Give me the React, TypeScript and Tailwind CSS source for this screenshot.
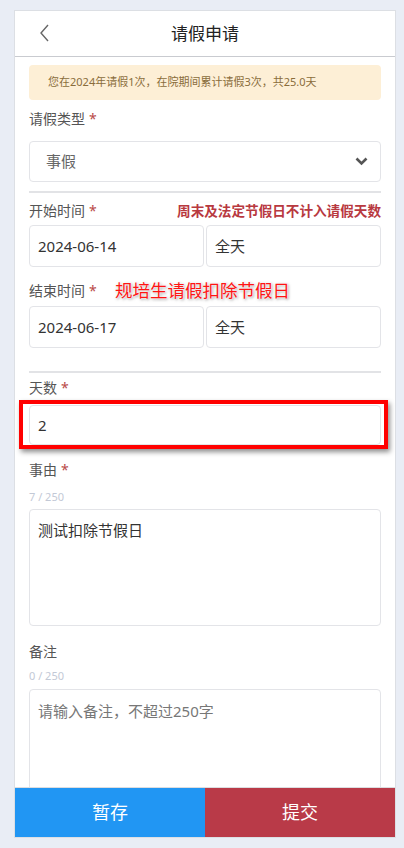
import { ReactNode } from 'react';

const font = "font-['Noto_Sans','Noto_Sans_CJK_SC',sans-serif]";

function Label({ children, required, className = '' }: { children: ReactNode; required?: boolean; className?: string }) {
  return (
    <div className={`h-[22px] leading-[22px] text-[14px] text-[#555] ${className}`}>
      {children}
      {required && <span className="ml-1 text-[#b94a48]">*</span>}
    </div>
  );
}

function Box({ children, className = '' }: { children?: ReactNode; className?: string }) {
  return (
    <div className={`border border-[#e3e4e8] rounded-[4px] bg-white flex items-center px-[8px] text-[15px] text-[#333] ${className}`}>
      {children}
    </div>
  );
}

function Counter({ text, className = '' }: { text: string; className?: string }) {
  return <div className={`h-[16px] leading-[16px] text-[11px] text-[#c3c9d6] ${className}`}>{text}</div>;
}

export default function App() {
  return (
    <div className={`min-h-[848px] bg-[#e9edf5] pt-[10px] ${font}`}>
      <div className="ml-[14px] w-[382px] h-[828px] bg-white border border-[#dcdfe4] flex flex-col overflow-hidden">
        {/* Header */}
        <div className="h-[46px] shrink-0 border-b border-[#c9cbd0] flex items-center relative">
          <svg className="absolute left-[24px] top-[13px]" width="12" height="18" viewBox="0 0 12 18">
            <polyline points="9,1 2,9 9,17" fill="none" stroke="#666" strokeWidth="1.4" />
          </svg>
          <div className="flex-1 text-center text-[17px] text-[#222]">请假申请</div>
        </div>

        {/* Form */}
        <div className="flex-1 overflow-hidden px-[14px]">
          <div className="mt-[8px] h-[35px] rounded-[4px] bg-[#fdefd6] flex items-center px-[19px] text-[11px] text-[#8a6d3b]">
            您在2024年请假1次，在院期间累计请假3次，共25.0天
          </div>

          <Label required className="mt-[8px]">请假类型</Label>
          <Box className="mt-[11px] h-[41px] justify-between pl-[16px] pr-[12px] text-[14px]">
            <span className="text-[#666]">事假</span>
            <svg width="13" height="9" viewBox="0 0 13 9">
              <polyline points="1.5,1.5 6.5,6.5 11.5,1.5" fill="none" stroke="#555" strokeWidth="2.6" />
            </svg>
          </Box>

          <div className="mt-[9px] h-[2px] bg-[#e2e3e6]" />

          <div className="mt-[7px] flex items-center justify-between">
            <Label required>开始时间</Label>
            <span className="text-[13.6px] font-bold text-[#b8393f]">周末及法定节假日不计入请假天数</span>
          </div>
          <div className="mt-[3px] grid grid-cols-2 gap-[2px]">
            <Box className="h-[42px]">2024-06-14</Box>
            <Box className="h-[42px]">全天</Box>
          </div>

          <div className="mt-[13px] relative">
            <Label required>结束时间</Label>
            <span className="absolute left-[86px] top-[-3px] text-[17.5px] text-[#ff1414] [text-shadow:0_0_2px_#fff,0_0_3px_#fff,1px_1px_3px_#777]">
              规培生请假扣除节假日
            </span>
          </div>
          <div className="mt-[4px] grid grid-cols-2 gap-[2px]">
            <Box className="h-[42px]">2024-06-17</Box>
            <Box className="h-[42px]">全天</Box>
          </div>

          <div className="mt-[23px] h-[2px] bg-[#e2e3e6]" />

          <Label required className="mt-[4px]">天数</Label>
          <div className="mt-[6px] relative">
            <Box className="h-[40px]">2</Box>
            <div className="absolute left-[-10px] top-[-5px] right-[-7px] bottom-[-4px] border-[4px] border-[#ff0000] shadow-[2px_3px_5px_rgba(0,0,0,0.45)]" />
          </div>

          <Label required className="mt-[14px]">事由</Label>
          <Counter text="7 / 250" className="mt-[8px]" />
          <Box className="mt-[4px] h-[117px] items-start pt-[9px]">测试扣除节假日</Box>

          <Label className="mt-[15px]">备注</Label>
          <Counter text="0 / 250" className="mt-[5px]" />
          <Box className="mt-[5px] h-[117px] items-start pt-[10px]">
            <span className="text-[#777]">请输入备注，不超过250字</span>
          </Box>
        </div>

        {/* Footer */}
        <div className="h-[50px] shrink-0 border-t border-[#dcdde0] grid grid-cols-2 text-white text-[18px]">
          <button className="bg-[#2196f3] flex items-center justify-center">暂存</button>
          <button className="bg-[#b93a48] flex items-center justify-center">提交</button>
        </div>
      </div>
    </div>
  );
}
